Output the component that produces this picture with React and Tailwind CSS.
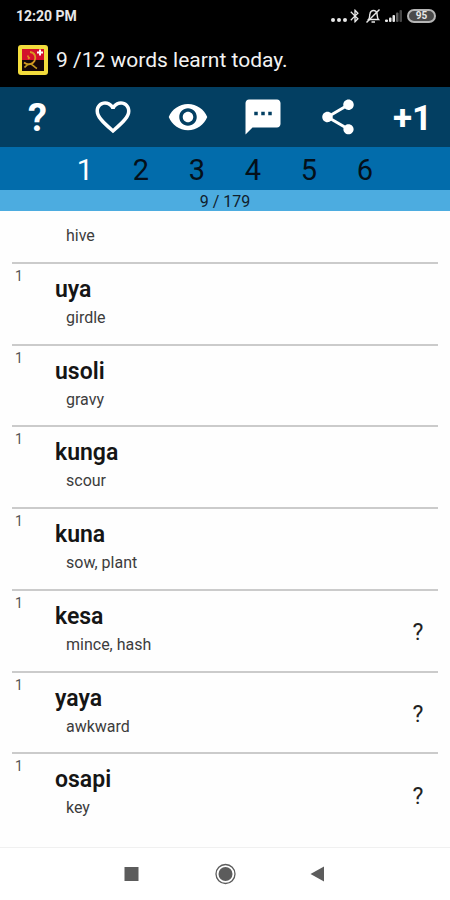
import React, { useState } from "react";
import { MdFavoriteBorder, MdVisibility, MdSms, MdShare, MdBluetooth } from "react-icons/md";

const words = [
  { word: "uya", meaning: "girdle" },
  { word: "usoli", meaning: "gravy" },
  { word: "kunga", meaning: "scour" },
  { word: "kuna", meaning: "sow, plant" },
  { word: "kesa", meaning: "mince, hash", unsure: true },
  { word: "yaya", meaning: "awkward", unsure: true },
  { word: "osapi", meaning: "key", unsure: true },
];

function StatusBar() {
  return (
    <div className="flex h-8 items-center justify-between pl-4 pr-3 text-[#e8e8e8]">
      <span className="text-sm font-bold">12:20 PM</span>
      <div className="flex items-center">
        <svg className="mt-2 h-1 w-4" viewBox="0 0 16 4" fill="currentColor" aria-hidden="true">
          <circle cx="2" cy="2" r="2" />
          <circle cx="8" cy="2" r="2" />
          <circle cx="14" cy="2" r="2" />
        </svg>
        <MdBluetooth className="size-4" aria-hidden="true" />
        <svg className="ml-0.5 h-4 w-4" viewBox="0 0 16 16" fill="none" stroke="currentColor" strokeWidth="1.4" aria-hidden="true">
          <path d="M3.500 11.500C5 10 4.500 7 5 5.500 5.500 3.500 7 2.500 8.500 2.500s3 1 3.500 3c.4 2 0 4.500 1.500 6zM6.500 14h3.500" />
          <path d="M1.500 14.500 14.500 1.500" />
        </svg>
        <svg className="ml-1 h-3 w-[18px]" viewBox="0 0 18 12" fill="currentColor" aria-hidden="true">
          <rect x="0" y="9.500" width="3" height="2.500" rx="1" />
          <rect x="4" y="7.500" width="2.500" height="4.500" rx="1" />
          <rect x="7.500" y="5" width="2.500" height="7" rx="1" />
          <rect x="11" y="2.500" width="2.500" height="9.500" rx="1" opacity="0.4" />
          <rect x="14.500" y="0" width="2.500" height="12" rx="1" opacity="0.3" />
        </svg>
        <span className="mr-0.5 ml-1 flex h-[14px] w-[29px] items-center justify-center rounded-full border-2 border-[#b5b5b5] bg-[#4a4a4a] text-[10px] leading-none font-bold">
          95
        </span>
      </div>
    </div>
  );
}

function AppLogo() {
  return (
    <svg className="size-[30px] shrink-0" viewBox="0 0 30 30" aria-hidden="true">
      <rect width="30" height="30" rx="3" fill="#f3dc3c" />
      <rect x="4" y="4" width="22" height="11" fill="#d3102c" />
      <rect x="4" y="15" width="22" height="11" fill="#160608" />
      <path d="M12 7c5 .5 6.500 5.500 4.500 9-2 3.500-6.500 4.500-10.500 1.500" fill="none" stroke="#d89a20" strokeWidth="1.800" />
      <path d="M6.500 22.500c2-2 3-3.500 5.500-3.500s4 3 7 4.500" fill="none" stroke="#c49a20" strokeWidth="1.600" />
      <path d="M9.500 10.500l1.500 2.500M10 14l2-1.500" fill="none" stroke="#e08a20" strokeWidth="1.500" />
      <path d="M22 4.500v6M19 7.500h6" stroke="#fff" strokeWidth="2" />
    </svg>
  );
}

function Toolbar() {
  const icon = "size-[42px]";
  const actions = [
    { label: "Help", content: <span className="pt-0.5 text-[38px] font-bold">?</span> },
    { label: "Favourites", content: <MdFavoriteBorder className={icon} /> },
    { label: "Show", content: <MdVisibility className={icon} /> },
    { label: "Phrases", content: <MdSms className={icon} /> },
    { label: "Share", content: <MdShare className={icon} /> },
    { label: "Plus one", content: <span className="pt-0.5 text-[35px] font-bold">+1</span> },
  ];
  return (
    <div className="grid h-[60px] shrink-0 grid-cols-6 bg-[#033f62] text-white">
      {actions.map(({ label, content }) => (
        <button key={label} type="button" aria-label={label} className="flex items-center justify-center leading-none">
          {content}
        </button>
      ))}
    </div>
  );
}

function Levels() {
  const [level, setLevel] = useState(1);
  return (
    <nav className="flex h-[43px] shrink-0 items-center justify-center bg-[#026cab]" aria-label="Levels">
      {[1, 2, 3, 4, 5, 6].map((n) => (
        <button
          key={n}
          type="button"
          onClick={() => setLevel(n)}
          className={n === level ? "w-14 pt-1 text-[29px] leading-none text-white" : "w-14 pt-1 text-[29px] leading-none text-[#04101a]"}
        >
          {n}
        </button>
      ))}
    </nav>
  );
}

function WordRow({ word, meaning, unsure }) {
  return (
    <li className="flex min-h-20 flex-1 items-start border-t-2 border-[#cbcbcb]">
      <span className="w-[43px] pt-1 pl-[3px] text-sm leading-4 text-[#555]">1</span>
      <div className="flex-1 pt-3">
        <h2 className="text-[23px] leading-7 font-semibold text-[#151515]">{word}</h2>
        <p className="pl-[11px] text-base leading-7 text-[#3c3c3c]">{meaning}</p>
      </div>
      {unsure && (
        <button type="button" aria-label={"Review " + word} className="w-10 self-center pt-1 text-[23px] leading-none text-[#222]">
          ?
        </button>
      )}
    </li>
  );
}

function SystemNav() {
  return (
    <footer className="flex h-[53px] shrink-0 items-center justify-center gap-[70px] border-t border-[#f0f0f0] bg-white text-[#5c5c5c]">
      <button type="button" aria-label="Recent apps">
        <svg className="size-6" viewBox="0 0 24 24" fill="currentColor"><rect x="5.500" y="5" width="14" height="14" /></svg>
      </button>
      <button type="button" aria-label="Home">
        <svg className="size-6" viewBox="0 0 24 24">
          <circle cx="12.500" cy="12" r="9.500" fill="none" stroke="currentColor" strokeWidth="1.300" />
          <circle cx="12.500" cy="12" r="7" fill="currentColor" />
        </svg>
      </button>
      <button type="button" aria-label="Back">
        <svg className="size-6" viewBox="0 0 24 24" fill="currentColor"><path d="M3.500 12 17 4.500v15z" /></svg>
      </button>
    </footer>
  );
}

export default function App() {
  return (
    <div className="flex h-screen flex-col bg-[#fefefe] font-[Roboto,sans-serif]">
      <header className="h-[87px] shrink-0 bg-black">
        <StatusBar />
        <div className="flex items-center gap-2 pt-3 pl-[18px] text-white">
          <AppLogo />
          <h1 className="text-[21px] leading-8 text-[#f2f2f2]">9 /12 words learnt today.</h1>
        </div>
      </header>
      <Toolbar />
      <Levels />
      <div className="h-[21px] shrink-0 bg-[#4cace0] pt-0.5 text-center text-base leading-5 text-[#10202c]">9 / 179</div>
      <main className="flex min-h-0 flex-1 flex-col overflow-hidden px-3 pb-[13px]">
        <p className="h-[51px] shrink-0 pt-[13px] pl-[54px] text-base leading-6 text-[#3c3c3c]">hive</p>
        <ul className="flex flex-1 flex-col">
          {words.map((item) => (
            <WordRow key={item.word} {...item} />
          ))}
        </ul>
      </main>
      <SystemNav />
    </div>
  );
}
